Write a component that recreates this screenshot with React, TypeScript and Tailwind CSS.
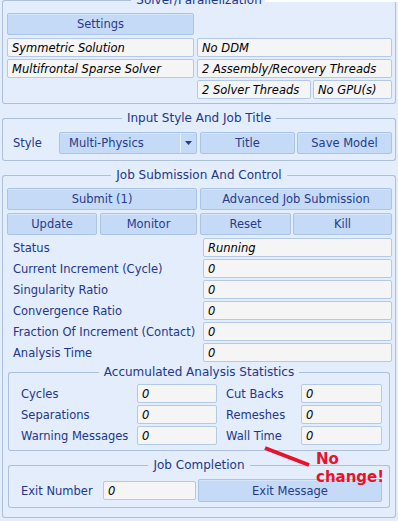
import React from "react";

type GP = { title: string; className?: string; bodyClass?: string; children?: React.ReactNode };

function Group({ title, className = "", bodyClass = "", children }: GP) {
  return (
    <div className={`flex flex-col ${className}`}>
      <div className="flex h-[14px]">
        <div className="flex-1 mt-[7px] border-t border-l border-[#adc0da] rounded-tl-[3px]" />
        <span className="px-[5px] text-[12px] leading-[14px] text-[#22378a] whitespace-nowrap">{title}</span>
        <div className="flex-1 mt-[7px] border-t border-r border-[#adc0da] rounded-tr-[3px]" />
      </div>
      <div className={`border-x border-b border-[#adc0da] rounded-b-[3px] ${bodyClass}`}>{children}</div>
    </div>
  );
}

function Btn({ children, className = "" }: { children: React.ReactNode; className?: string }) {
  return (
    <div
      className={`h-[22px] flex items-center justify-center rounded-[2px] border border-[#a9c4e8] bg-[#c4daf6] text-[#283a8c] whitespace-nowrap shadow-[inset_0_1px_0_#d6e6fa] ${className}`}
    >
      {children}
    </div>
  );
}

function Cell({ children, className = "" }: { children?: React.ReactNode; className?: string }) {
  return (
    <div
      className={`h-[19px] flex items-center pl-[4px] rounded-[2px] border border-[#b2c9e9] bg-[#f5f5f5] italic text-black whitespace-nowrap overflow-hidden ${className}`}
    >
      {children}
    </div>
  );
}

function StatusRow({ label, value }: { label: string; value: string }) {
  return (
    <div className="flex h-[19px] items-center">
      <div className="w-[196px] pl-[6px] text-[#24368a] whitespace-nowrap">{label}</div>
      <Cell className="w-[189px]">{value}</Cell>
    </div>
  );
}

function StatRow({ l1, l2 }: { l1: string; l2: string }) {
  return (
    <div className="flex h-[19px] items-center">
      <div className="w-[116px] text-[#24368a] whitespace-nowrap">{l1}</div>
      <Cell className="w-[80px]">0</Cell>
      <div className="w-[75px] ml-[9px] text-[#24368a] whitespace-nowrap">{l2}</div>
      <Cell className="w-[81px]">0</Cell>
    </div>
  );
}

export default function App() {
  return (
    <div className="relative w-[398px] h-[521px] overflow-hidden bg-[#e3edfb] px-[2px] text-[11.5px] leading-[14px] [font-family:'DejaVu_Sans',Verdana,sans-serif]">
      <div className="absolute top-0 right-0 w-[133px] h-[2px] bg-white" />

      {/* Solver / Parallelization */}
      <Group title="Solver/Parallelization" className="-mt-[7px]" bodyClass="pt-[6px] pb-[4px] pl-[4px] pr-[3px]">
        <Btn className="w-[187px]">Settings</Btn>
        <div className="mt-[3px] flex flex-col gap-[2px]">
          <div className="flex gap-[3px]">
            <Cell className="w-[187px]">Symmetric Solution</Cell>
            <Cell className="w-[195px]">No DDM</Cell>
          </div>
          <div className="flex gap-[3px]">
            <Cell className="w-[187px]">Multifrontal Sparse Solver</Cell>
            <Cell className="w-[195px]">2 Assembly/Recovery Threads</Cell>
          </div>
          <div className="flex gap-[3px]">
            <div className="w-[187px]" />
            <div className="w-[195px] flex gap-[2px]">
              <Cell className="w-[114px]">2 Solver Threads</Cell>
              <Cell className="flex-1">No GPU(s)</Cell>
            </div>
          </div>
        </div>
      </Group>

      {/* Input Style And Job Title */}
      <Group title="Input Style And Job Title" className="mt-[7px]" bodyClass="pt-[7px] pb-[6px] pr-[3px]">
        <div className="flex items-center">
          <div className="w-[56px] pl-[10px] text-[#24368a]">Style</div>
          <div className="w-[138px] h-[22px] flex rounded-[2px] border border-[#a9c4e8] bg-[#c4daf6] text-[#283a8c] shadow-[inset_0_1px_0_#d6e6fa]">
            <div className="flex-1 flex items-center pl-[9px]">Multi-Physics</div>
            <div className="w-[16px] flex items-center justify-center border-l border-[#e6effb]">
              <svg width="7" height="4" viewBox="0 0 7 4">
                <path d="M0 0 L7 0 L3.5 4 Z" fill="#283a8c" />
              </svg>
            </div>
          </div>
          <Btn className="w-[95px] ml-[3px]">Title</Btn>
          <Btn className="w-[95px] ml-[2px]">Save Model</Btn>
        </div>
      </Group>

      {/* Job Submission And Control */}
      <Group title="Job Submission And Control" className="mt-[7px]" bodyClass="pt-[6px] pb-[9px] pl-[4px] pr-[3px]">
        <div className="flex gap-[3px]">
          <Btn className="w-[190px]">Submit (1)</Btn>
          <Btn className="w-[192px]">Advanced Job Submission</Btn>
        </div>
        <div className="flex mt-[3px]">
          <Btn className="w-[90px]">Update</Btn>
          <Btn className="w-[97px] ml-[3px]">Monitor</Btn>
          <Btn className="w-[91px] ml-[3px]">Reset</Btn>
          <Btn className="w-[99px] ml-[2px]">Kill</Btn>
        </div>
        <div className="mt-[3px] flex flex-col gap-[2px]">
          <StatusRow label="Status" value="Running" />
          <StatusRow label="Current Increment (Cycle)" value="0" />
          <StatusRow label="Singularity Ratio" value="0" />
          <StatusRow label="Convergence Ratio" value="0" />
          <StatusRow label="Fraction Of Increment (Contact)" value="0" />
          <StatusRow label="Analysis Time" value="0" />
        </div>

        <Group
          title="Accumulated Analysis Statistics"
          className="mt-[3px] ml-[1px] w-[382px]"
          bodyClass="pt-[5px] pb-[5px] pl-[12px] flex flex-col gap-[2px]"
        >
          <StatRow l1="Cycles" l2="Cut Backs" />
          <StatRow l1="Separations" l2="Remeshes" />
          <StatRow l1="Warning Messages" l2="Wall Time" />
        </Group>

        <Group title="Job Completion" className="mt-[7px] ml-[1px] w-[382px]" bodyClass="pt-[7px] pb-[5px] pl-[12px]">
          <div className="flex items-center h-[23px]">
            <div className="w-[82px] text-[#24368a] whitespace-nowrap">Exit Number</div>
            <Cell className="w-[93px]">0</Cell>
            <Btn className="w-[184px] h-[23px] ml-[2px]">Exit Message</Btn>
          </div>
        </Group>
      </Group>

      {/* Annotation overlay */}
      <svg className="absolute left-0 top-0" width="398" height="521" viewBox="0 0 398 521">
        <line x1="265" y1="448" x2="309" y2="465" stroke="#e8132b" strokeWidth="4" />
      </svg>
      <div className="absolute left-[316px] top-[450px] text-[15px] leading-[18px] font-bold text-[#e8132b] [font-family:'DejaVu_Sans',sans-serif]">
        <div>No</div>
        <div>change!</div>
      </div>
    </div>
  );
}
